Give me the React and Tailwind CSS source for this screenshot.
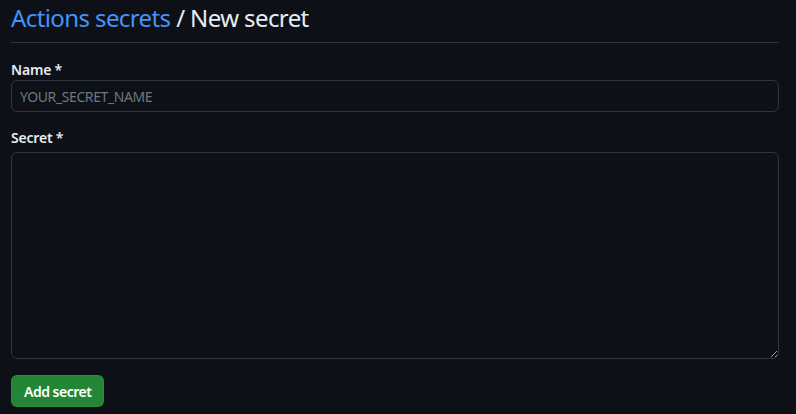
export default function App() {
  return (
    <div
      className="min-h-[414px] w-full bg-[#0d1117] px-[11px] pr-[17px] text-[#e6edf3]"
      style={{ fontFamily: '"Noto Sans", "Open Sans", sans-serif' }}
    >
      <div className="border-b border-[#30363d] pb-[6px]">
        <h1 className="text-[24px] font-normal leading-[36px] tracking-[-0.6px]">
          <a href="#" className="text-[#4493f8]">
            Actions secrets
          </a>{" "}
          / New secret
        </h1>
      </div>

      <form className="pt-[17px]" onSubmit={(e) => e.preventDefault()}>
        <label htmlFor="secret-name" className="block text-[14px] font-semibold leading-[20px] tracking-[-0.2px]">
          Name *
        </label>
        <input
          id="secret-name"
          type="text"
          placeholder="YOUR_SECRET_NAME"
          className="block h-[32px] w-full rounded-md border border-[#30363d] bg-[#0d1117] px-2 text-[14px] tracking-[-0.4px] text-[#e6edf3] placeholder:text-[#6e7681] outline-none"
        />

        <label htmlFor="secret-value" className="mt-4 mb-1 block text-[14px] font-semibold leading-[20px] tracking-[-0.2px]">
          Secret *
        </label>
        <textarea
          id="secret-value"
          className="block h-[207px] w-full rounded-md border border-[#30363d] bg-[#0d1117] px-2 py-1 text-[14px] text-[#e6edf3] outline-none"
        />

        <button
          type="submit"
          className="mt-[16px] h-[32px] rounded-md border border-[#2ea043]/40 bg-[#238636] px-[12px] text-[14px] font-semibold tracking-[-0.5px] text-white"
        >
          Add secret
        </button>
      </form>
    </div>
  );
}
